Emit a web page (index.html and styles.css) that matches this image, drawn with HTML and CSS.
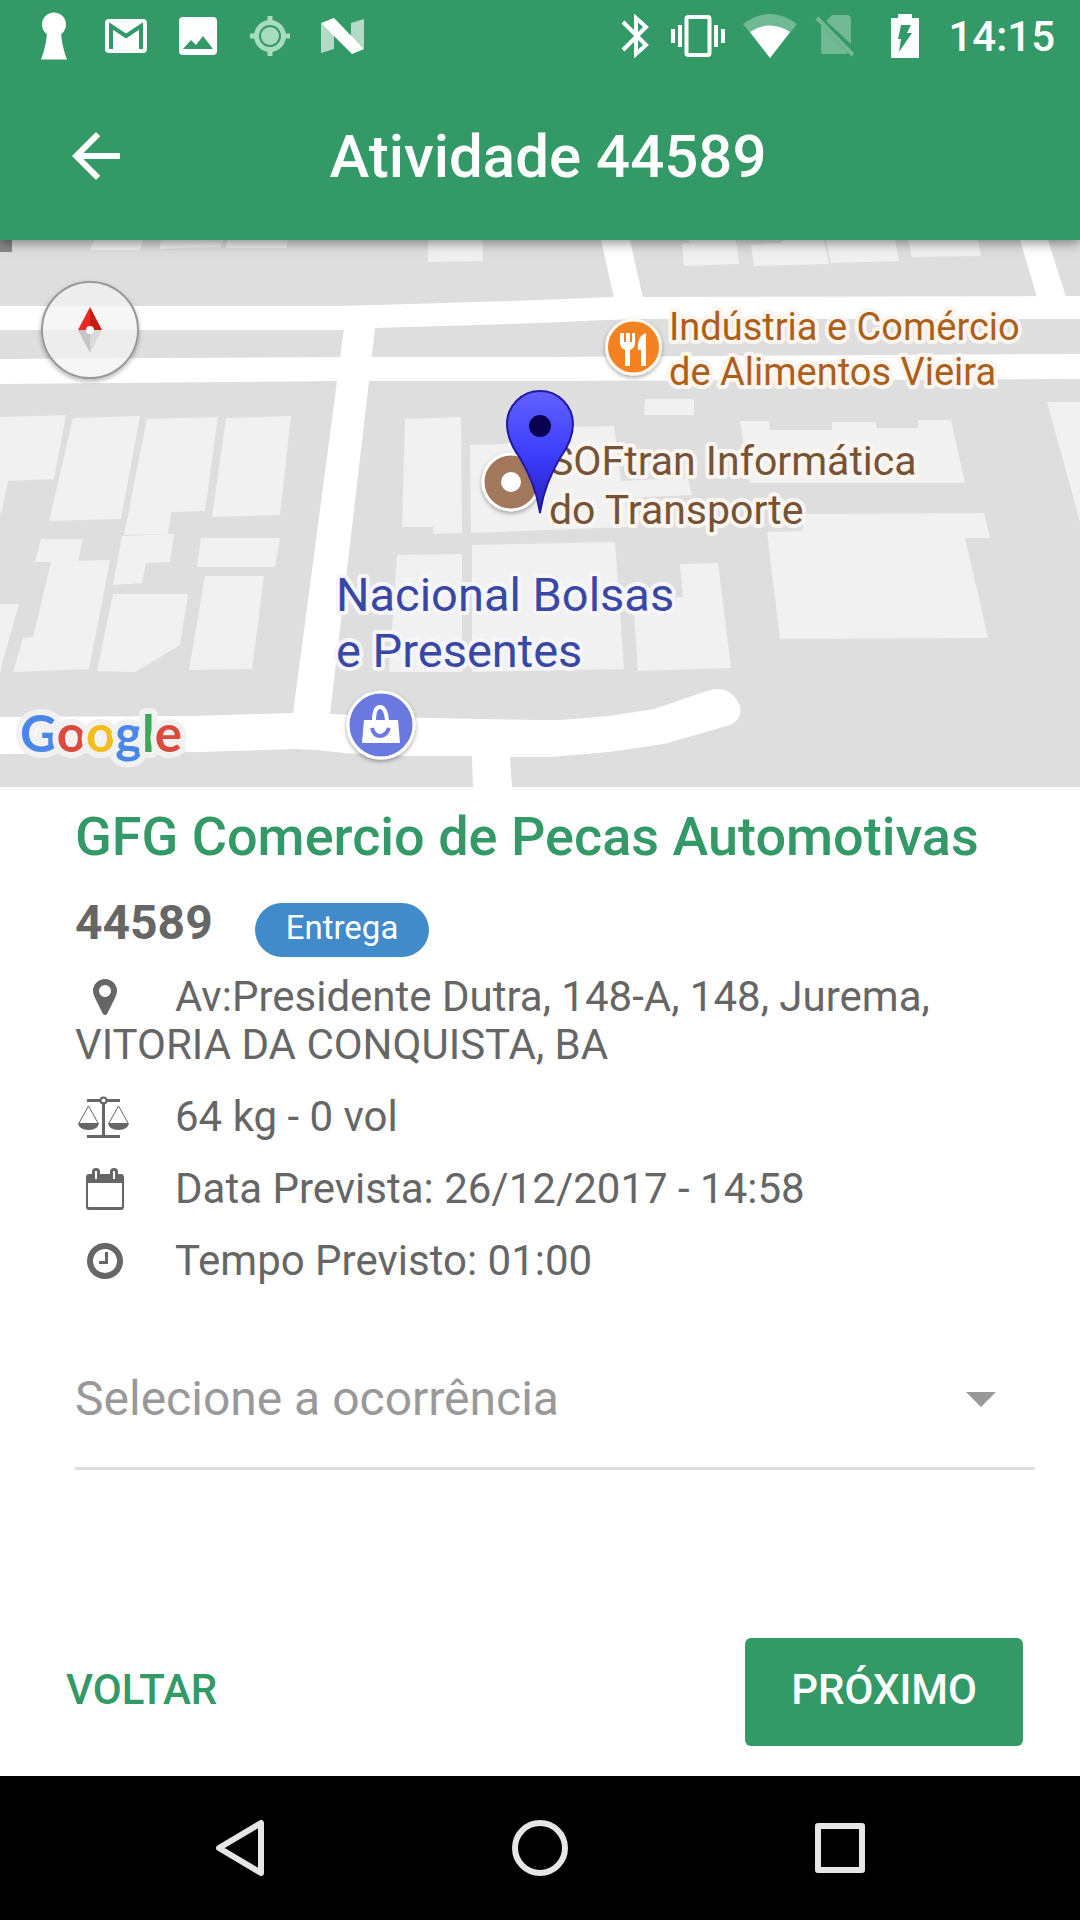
FILE: index.html
```html
<!DOCTYPE html>
<html lang="pt-BR">
<head>
<meta charset="utf-8">
<meta name="viewport" content="width=device-width, initial-scale=1">
<title>Atividade 44589</title>
<link rel="stylesheet" href="styles.css">
</head>
<body>
<div class="status">
  <div class="status-left">
    <svg width="28" height="48" viewBox="0 0 28 48" fill="#fff"><circle cx="14" cy="12.500" r="12"/><path d="M7 18h14q0 14 6 29.500H1Q7 32 7 18z"/></svg>
    <svg width="42" height="34" viewBox="0 0 42 34"><rect width="42" height="34" rx="4" fill="#fff"/><path d="M6 30V7l15 10L36 7v23" fill="none" stroke="#396" stroke-width="4"/></svg>
    <svg width="38" height="38" viewBox="0 0 38 38"><rect width="38" height="38" rx="4" fill="#fff"/><path d="M4 32l8-9 5 5 7-9 10 13z" fill="#396"/></svg>
    <svg class="gps" width="40" height="40" viewBox="0 0 40 40" fill="none" stroke="#a8dcc0"><circle cx="20" cy="20" r="9" fill="#a8dcc0" stroke="none"/><circle cx="20" cy="20" r="13.500" stroke-width="5"/><path d="M20 0v6M20 34v6M0 20h6M34 20h6" stroke-width="5"/></svg>
    <svg width="43" height="36" viewBox="0 0 43 36"><path d="M0 5l13 12v14L0 35zM30 5l13-4v30L30 19z" fill="#b4d9c5"/><path d="M0 5L13 0l30 31-12 5z" fill="#fff"/></svg>
  </div>
  <div class="status-right">
    <svg class="bluetooth" width="28" height="44" viewBox="0 0 28 44" fill="none" stroke="#fff" stroke-width="4"><path d="M2 8l23 23-10 9V4l10 9L2 36"/></svg>
    <svg width="54" height="42" viewBox="0 0 54 42" fill="#fff"><path d="M0 14h4v14H0zM7 10h4v22H7zM43 10h4v22h-4zM50 14h4v14h-4z"/><rect x="15.500" y="2" width="23" height="38" rx="2" fill="none" stroke="#fff" stroke-width="4"/></svg>
    <svg width="54" height="44" viewBox="0 0 54 44"><path d="M0 10Q27-10 54 10L27 44z" fill="#71b994"/><path d="M7 18q20-13 40 0L27 44z" fill="#fff"/></svg>
    <svg class="sim" width="40" height="44" viewBox="0 0 40 44" fill="#71b994"><path d="M11 7l6-6h15q4 0 4 4v25zM6 11l27 28-2 1H9q-3 0-3-3z"/><path d="M2 4l36 37" stroke="#71b994" stroke-width="4"/></svg>
    <svg width="28" height="44" viewBox="0 0 28 44"><path d="M0 4h7V0h14v4h7v40H0z" fill="#fff"/><path d="M10 11h10l-4 8h5L8 38l2-13H7z" fill="#396"/></svg>
    <span class="time">14:15</span>
  </div>
</div>
<header class="bar">
  <button class="back" type="button" aria-label="Voltar"><svg width="72" height="72" viewBox="0 0 24 24" fill="#fff"><path d="M20 11H7.830l5.590-5.590L12 4l-8 8 8 8 1.410-1.410L7.830 13H20v-2z"/></svg></button>
  <h1>Atividade 44589</h1>
</header>
<main>
  <div class="map">
    <svg class="map-art" viewBox="0 0 1080 547" role="img" aria-label="Mapa">
      <defs>
        <linearGradient id="pin" x1="0" y1="0" x2="0" y2="1"><stop offset="0" stop-color="#6262ff"/><stop offset=".55" stop-color="#3b3bfa"/><stop offset="1" stop-color="#2a20b8"/></linearGradient>
        <filter id="soft" x="-30%" y="-30%" width="160%" height="160%"><feDropShadow dx="0" dy="2" stdDeviation="2" flood-opacity=".35"/></filter>
      </defs>
      <rect width="1080" height="547" fill="#dedede"/>
      <g fill="#f1f1f1">
        <path d="M94 0h49l-3 10H90zM161 0h62l-2 7-42 1-19 1zM227 0h61l-2 8h-60zM428 0h55v21l-55 1z"/>
        <path d="M682 3h8l-1-3h47l3 24-55 2zM751 5l30-2 2-3h41l5 24-75 2zM826 0h69l4 21-68 2zM908 0h70l3 16-69 1z"/>
        <path d="M645 159h49v16h-50zM1047 162h33v120l-6-22z"/>
        <path d="M740 181h29l1 9h62v-8h44l1 6h41v-8h33l14 63H750z"/>
        <path d="M470 205l35-1 50-17 59-1 7 55 67-3 4 17-67 3 2 29-156 6z"/>
        <path d="M405 179l56-2 1 116-29 1v-7h-31zM397 315l65-1v118h-73zM472 305l143-3 9 127-152 3z"/>
        <path d="M680 324l38-1 13 105-93 3-5-73 50-1z"/>
        <path d="M767 292l35-1 3-17 179-1 6 25h-25l23 100-208 1z"/>
        <path d="M0 177l66-2-12 64-46 2-6 29-2 4zM73 178l67-2-19 103-72 2zM147 179l71-2-13 94-34 1-3 22-44 1zM226 178l65-2-11 99-68 2z"/>
        <path d="M41 299h42l-5 22 32-1-21 109-76 3 10-34 10-1 18-75H35zM122 296l52-2-4 28-24 1-4 20-29 2zM201 298h79l-5 29h-78zM205 336h59l-12 93-63 1zM113 354h75l-8 51-45 27-38-1zM0 364h19L3 420l-3 13z"/>
      </g>
      <rect width="12" height="12" fill="#888"/>
      <g fill="#fff">
        <path d="M0 66h341l199-6 74-3 466-1v23H643l-38 1-65 3-166 5-30 2H0z"/>
        <path d="M0 119l340-2h200l540-3v25l-540 2H337L0 144z"/>
        <path d="M344 88H375L369 141L354 270L330 474L427 478L540 480H561L609 476L654 469L707 451Q723 445 734 456Q749 475 730 485L664 504L609 512L550 517H510L512 547H473L472 516H403L344 513L317 510L296 509L200 512L0 514V477L193 476L293 473L320 270Z"/>
        <path d="M601 0h29l13 58h-29zM1020 0h28l18 57h-29z"/>
      </g>
      <g filter="url(#soft)">
        <circle cx="90" cy="90" r="48" fill="#fff" fill-opacity=".65" stroke="#999" stroke-width="2"/>
      </g>
      <path d="M90 67L78 90h12z" fill="#ea2a22"/><path d="M90 67l12 23H90z" fill="#c81d16"/><path d="M78 90h12v23z" fill="#c4c4c4"/><path d="M90 90h12l-12 23z" fill="#dadada"/><circle cx="90" cy="90" r="4" fill="#fff"/>
      <g filter="url(#soft)"><circle cx="633.500" cy="107" r="27" fill="#f58220" stroke="#fff8f0" stroke-width="3"/></g>
      <path d="M620 93v10q0 5 5 7v16h5v-16q5-2 5-7V93h-3v9h-2v-9h-4v9h-2v-9zM646 93q-9 3-8 17h3v16h5z" fill="#fff"/>
      <g filter="url(#soft)"><circle cx="511" cy="242" r="28" fill="#a1785c" stroke="#fff" stroke-width="3"/></g>
      <circle cx="511" cy="242" r="10" fill="#fff"/>
      <g filter="url(#soft)"><circle cx="381" cy="485" r="33" fill="#6b79e0" stroke="#fff" stroke-width="3"/></g>
      <path d="M364 480h34l2 23h-38z" fill="#fff"/><path d="M374 481q0-14 6-14t7 14" fill="none" stroke="#fff" stroke-width="4"/><path d="M372 488q2 8 8 8t9-8" fill="none" stroke="#6b79e0" stroke-width="4"/>
      <g class="label">
        <text class="food" x="669" y="100">Indústria e Comércio</text>
        <text class="food" x="669" y="145">de Alimentos Vieira</text>
        <text class="place" x="549" y="235">SOFtran Informática</text>
        <text class="place" x="549" y="284">do Transporte</text>
        <text class="shop" x="336" y="371">Nacional Bolsas</text>
        <text class="shop" x="336" y="427">e Presentes</text>
      </g>
      <path d="M540 273Q536 245 520 218Q507 200 507 184A33 33 0 0 1 573 184Q573 200 560 218Q544 245 540 273z" fill="url(#pin)" stroke="#2219a0" stroke-width="2"/>
      <circle cx="540" cy="186" r="11" fill="#090052"/>
      <text class="google" x="20" y="512"><tspan fill="#4a86e8">G</tspan><tspan fill="#dc4a3d">o</tspan><tspan fill="#f2bd1d">o</tspan><tspan fill="#4a86e8">g</tspan><tspan fill="#3fa557">l</tspan><tspan fill="#dc4a3d">e</tspan></text>
    </svg>
  </div>
  <section class="details">
    <h2>GFG Comercio de Pecas Automotivas</h2>
    <div class="ident"><strong>44589</strong><span class="badge">Entrega</span></div>
    <p><svg class="ico" viewBox="0 0 60 48"><path fill-rule="evenodd" d="M30 6a12 12 0 0 1 12 12q0 3-2 7l-8 16q-2 2-4 0l-8-16q-2-4-2-7A12 12 0 0 1 30 6zm0 6a6 6 0 1 0 0 12 6 6 0 0 0 0-12z"/></svg>Av:Presidente Dutra, 148-A, 148, Jurema, VITORIA DA CONQUISTA, BA</p>
    <p><svg class="ico" viewBox="0 0 60 48"><path d="M12 6h13v3H12zM32 6h13v3H32zM27 9h3v34h-3zM12 42h33v3H12zM3 30h21q-1 7-10.500 7T3 30zM33 30h21q-1 7-10.500 7T33 30z"/><circle cx="28.500" cy="7.500" r="3" fill="none" stroke="#666" stroke-width="2"/><path d="M4 30l9.500-17L23 30M34 30l9.500-17L53 30" fill="none" stroke="#666"/></svg>64 kg - 0 vol</p>
    <p><svg class="ico" viewBox="0 0 60 48"><path fill-rule="evenodd" d="M14 9h3V7q0-4 4-4t4 4v2h10V7q0-4 4-4t4 4v2h3q3 0 3 3v30q0 3-3 3H14q-3 0-3-3V12q0-3 3-3zm-1 9v23q0 1 1 1h32q1 0 1-1V18zm7-12v8h2V6zm18 0v8h2V6z"/></svg>Data Prevista: 26/12/2017 - 14:58</p>
    <p><svg class="ico" viewBox="0 0 60 48"><circle cx="30" cy="24" r="15" fill="none" stroke="#666" stroke-width="6"/><path d="M30 15h3v12h-9v-3h6z"/></svg>Tempo Previsto: 01:00</p>
    <div class="field">
      <select aria-label="Ocorrência"><option>Selecione a ocorrência</option></select>
      <svg class="caret" width="30" height="15" viewBox="0 0 30 15"><path d="M0 0h30L15 15z" fill="#999"/></svg>
    </div>
  </section>
</main>
<footer class="actions">
  <button class="flat" type="button">VOLTAR</button>
  <button class="raised" type="button">PRÓXIMO</button>
</footer>
<nav class="nav">
  <button type="button" aria-label="Voltar"><svg width="60" height="60" viewBox="0 0 60 60"><path d="M51 5v50L9 30z"/></svg></button>
  <button type="button" aria-label="Início"><svg width="60" height="60" viewBox="0 0 60 60"><circle cx="30" cy="30" r="25"/></svg></button>
  <button type="button" aria-label="Recentes"><svg width="60" height="60" viewBox="0 0 60 60"><rect x="8" y="8" width="44" height="44"/></svg></button>
</nav>
</body>
</html>
```
FILE: styles.css
```css
* { box-sizing: border-box; }

body {
  margin: 0;
  min-height: 100vh;
  display: flex;
  flex-direction: column;
  background: #fff;
  color: #666;
  font-family: Roboto, sans-serif;
  font-size: 42px;
  line-height: 48px;
}

svg { display: block; }
h1, h2, p { margin: 0; }

button {
  padding: 0;
  border: 0;
  background: none;
  font: inherit;
  color: inherit;
}

.status {
  position: relative;
  z-index: 2;
  display: flex;
  justify-content: space-between;
  height: 72px;
  padding: 0 25px 0 18px;
  background: #396;
  color: #fff;
}

.status-left {
  display: grid;
  grid-template-columns: repeat(5, 72px);
  place-items: center;
}

.status-right {
  display: flex;
  align-items: center;
  gap: 18px;
}

.bluetooth { margin-right: 4px; }
.sim { margin-right: 18px; }

.time {
  margin-left: 11px;
  padding-top: 2px;
  font-weight: 500;
}

.bar {
  position: relative;
  z-index: 1;
  display: grid;
  grid-template-columns: 72px 1fr 72px;
  align-items: center;
  height: 168px;
  padding: 0 44px 0 60px;
  background: #396;
  color: #fff;
  box-shadow: 0 2px 12px rgba(0, 0, 0, .5);
}

.bar h1 {
  padding-top: 2px;
  font-size: 60px;
  line-height: 72px;
  font-weight: 500;
  text-align: center;
}

.map-art { width: 100%; height: auto; }

.label text {
  stroke: #fbf5f0;
  stroke-width: 8px;
  stroke-linejoin: round;
  paint-order: stroke;
}

.food { font-size: 38px; fill: #ad5f1a; }
.place { font-size: 41px; fill: #745338; }
.label .shop { font-size: 47px; fill: #3a48a5; stroke: #f5f5fb; }

.google {
  font-family: Lato, sans-serif;
  font-size: 51px;
  font-weight: 700;
  stroke: #f1f1f1;
  stroke-width: 12px;
  stroke-linejoin: round;
  paint-order: stroke;
}

.details { padding: 18px 45px 0 75px; }

.details h2 {
  color: #396;
  font-size: 54px;
  line-height: 64px;
  font-weight: 500;
}

.ident {
  display: flex;
  align-items: flex-start;
  gap: 42px;
  height: 72px;
  margin: 26px 0 6px;
}

.ident strong { font-size: 48px; line-height: 56px; }

.badge {
  margin-top: 8px;
  padding: 1px 31px 5px;
  border-radius: 27px;
  background: #428bca;
  color: #fff;
  font-size: 33px;
}

.details p { margin-bottom: 24px; }

.ico {
  display: inline-block;
  width: 60px;
  height: 48px;
  margin-right: 40px;
  vertical-align: top;
  fill: #666;
}

.field {
  position: relative;
  margin-top: 46px;
  border-bottom: 3px solid #ddd;
}

.field select {
  display: block;
  width: 100%;
  height: 136px;
  padding: 0;
  border: 0;
  appearance: none;
  background: none;
  color: #999;
  font: inherit;
  font-size: 48px;
}

.caret {
  position: absolute;
  top: 61px;
  right: 39px;
  pointer-events: none;
}

.actions {
  display: flex;
  align-items: center;
  justify-content: space-between;
  margin-top: auto;
  padding: 30px 57px 30px 66px;
  color: #396;
  font-weight: 500;
}

.raised {
  height: 108px;
  padding: 0 46px 4px;
  border-radius: 6px;
  background: #396;
  color: #fff;
}

.flat { height: 108px; padding-bottom: 4px; }

.nav {
  display: flex;
  justify-content: space-between;
  align-items: center;
  height: 144px;
  padding: 0 210px;
  background: #000;
}

.nav svg {
  fill: none;
  stroke: #e6e6e6;
  stroke-width: 6px;
  stroke-linejoin: round;
}
```
